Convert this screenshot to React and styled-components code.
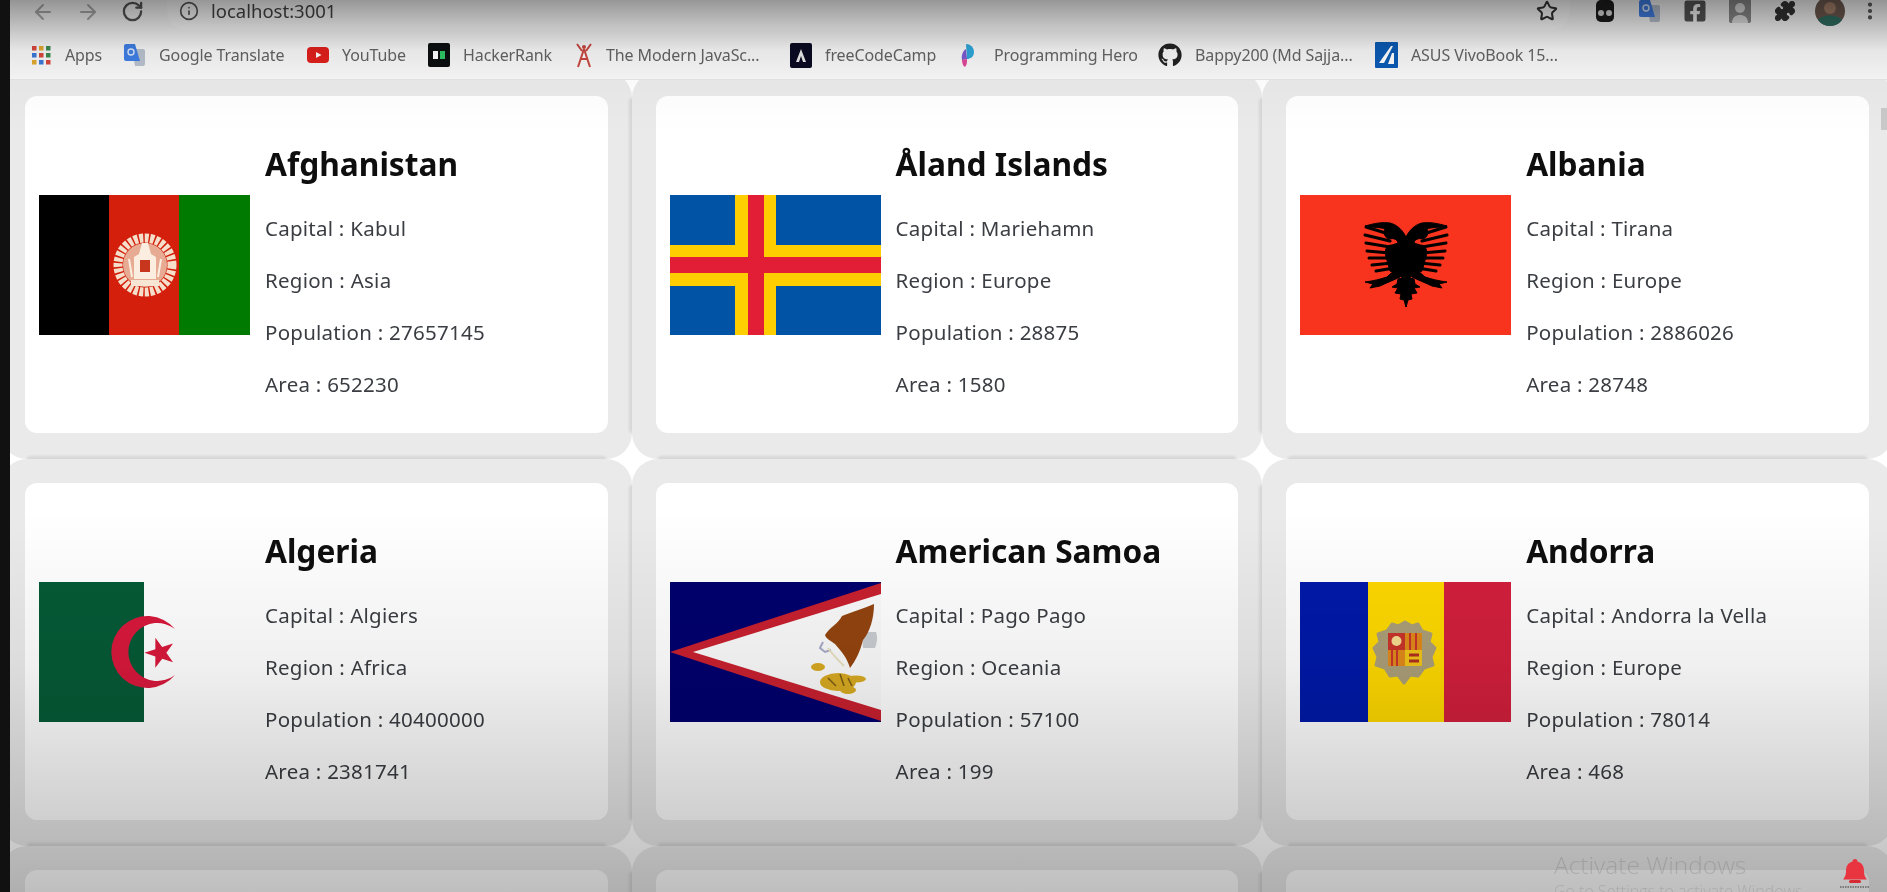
import styled, { createGlobalStyle } from "styled-components";
import { ArrowLeft, ArrowRight, RotateCw, Info, Star, Puzzle, MoreVertical } from "lucide-react";
import { FaGithub, FaFacebookSquare } from "react-icons/fa";

const GlobalStyle = createGlobalStyle`
  html, body { margin: 0; padding: 0; background: #fff; }
  body { font-family: "Noto Sans", "Open Sans", sans-serif; overflow: hidden; }
  #root { filter: blur(0.55px); }
`;

const Page = styled.div`
  position: relative;
  height: 100vh;
  overflow: hidden;
  background: #fff;
`;

const Chrome = styled.header`
  position: relative;
  z-index: 2;
  height: 80px;
  background: #f7f7f7;
  border-bottom: 1px solid #e4e4e4;
  box-sizing: border-box;
`;

const AddressRow = styled.div`
  display: flex;
  align-items: flex-start;
  height: 30px;
  padding-left: 20px;
  color: #666;
`;

const NavButton = styled.span`
  width: 45px;
  flex: none;
  display: flex;
  justify-content: center;
  color: ${(p) => (p.$active ? "#555" : "#aaa")};
`;

const Pill = styled.div`
  display: flex;
  flex: none;
  align-items: center;
  gap: 12px;
  width: 1403px;
  height: 30px;
  margin-left: 12px;
  padding: 0 12px 8px 12px;
  box-sizing: border-box;
  background: #fbfbfb;
  border-radius: 0 0 20px 20px;
  color: #555;
  font-size: 18.5px;
  line-height: 20px;
  font-family: "Noto Sans", sans-serif;
`;

const Host = styled.span`
  flex: 1;
  color: #444;
`;

const Extensions = styled.div`
  display: flex;
  flex: none;
  margin-left: 12px;
`;

const Extension = styled.span`
  width: ${(p) => p.$w || 45}px;
  height: 22px;
  display: flex;
  align-items: center;
  justify-content: center;
  color: ${(p) => p.$color || "#444"};
`;

const Bookmarks = styled.nav`
  display: flex;
  align-items: center;
  height: 50px;
  padding-left: 30px;
`;

const Bookmark = styled.a`
  display: flex;
  align-items: center;
  gap: 13px;
  width: ${(p) => p.$w}px;
  flex: none;
  font-size: 16px;
  font-family: "Noto Sans", sans-serif;
  letter-spacing: -0.1px;
  color: #636363;
  white-space: nowrap;
`;

const Grid = styled.main`
  display: grid;
  grid-template-columns: repeat(3, 630.6px);
  grid-auto-rows: 387px;
  margin-top: -8px;
  padding-left: 1px;
`;

const Tile = styled.section`
  position: relative;
  padding: 24px;
  background: #eaeaea;
  border-radius: 26px;

  &::before,
  &::after {
    content: "";
    position: absolute;
    background: rgba(0, 0, 0, 0.08);
    border-radius: 3px;
    filter: blur(1px);
  }
  &::before {
    left: 26px;
    right: 26px;
    bottom: -3px;
    height: 6px;
  }
  &::after {
    top: 26px;
    bottom: 26px;
    right: -3px;
    width: 6px;
  }
`;

const Card = styled.article`
  display: flex;
  align-items: center;
  gap: 15px;
  height: 337px;
  padding-left: 14px;
  background: #fff;
  border-radius: 12px;
`;

const FlagBox = styled.svg`
  width: 211px;
  height: 140px;
  flex: none;
  display: block;
`;

const Details = styled.div`
  display: flex;
  flex-direction: column;
  height: 100%;
  padding-top: 48px;
  box-sizing: border-box;
`;

const Name = styled.h2`
  margin: 0 0 28px;
  font-size: 31.7px;
  line-height: 40px;
  font-weight: 700;
  color: #0e0e0e;
`;

const Fact = styled.p`
  margin: 0 0 20px;
  font-size: 20.5px;
  letter-spacing: 0.25px;
  line-height: 32px;
  color: #3a3d42;
`;

const Shade = styled.div`
  position: absolute;
  left: 0;
  right: 0;
  z-index: 3;
  pointer-events: none;
  ${(p) =>
    p.$top
      ? `top: 0; height: 135px; background: linear-gradient(to bottom, rgba(0,0,0,.4), rgba(0,0,0,.2) 30px, rgba(0,0,0,.07) 50px, rgba(0,0,0,.02) 80px, transparent);`
      : `bottom: 0; height: 380px; background: linear-gradient(to bottom, transparent, rgba(0,0,0,.06) 40%, rgba(0,0,0,.2) 85%, rgba(0,0,0,.25));`}
`;

const BlackEdge = styled.div`
  position: absolute;
  top: 0;
  bottom: 0;
  left: 0;
  width: 10px;
  z-index: 4;
  background: #111;
`;

const ScrollThumb = styled.div`
  position: absolute;
  top: 108px;
  right: 0;
  width: 6px;
  height: 22px;
  z-index: 2;
  background: #c9c9c9;
`;

const Watermark = styled.div`
  position: absolute;
  left: 1554px;
  top: 850px;
  z-index: 4;
  color: rgba(0, 0, 0, 0.12);
  font-family: "Open Sans", sans-serif;
  font-size: 24.5px;
  line-height: 30px;
  font-weight: 300;
  white-space: nowrap;
  small {
    display: block;
    font-size: 16px;
    line-height: 22px;
  }
`;

const Bell = styled.svg`
  position: absolute;
  left: 1838px;
  top: 856px;
  width: 34px;
  height: 34px;
  z-index: 4;
`;

/* favicons */
const AppsIcon = () => (
  <svg width="22" height="22" viewBox="0 0 22 22">
    {[0, 1, 2].flatMap((r) =>
      [0, 1, 2].map((c) => (
        <rect
          key={`${r}${c}`}
          x={2 + c * 7}
          y={2 + r * 7}
          width="4.5"
          height="4.5"
          fill={[["#d9473c", "#e0a82e", "#3d8b4f"], ["#3b78d8", "#d9473c", "#3d8b4f"], ["#e0a82e", "#3b78d8", "#d9473c"]][r][c]}
        />
      ))
    )}
  </svg>
);

const TranslateIcon = ({ size = 22 }) => (
  <svg width={size} height={size} viewBox="0 0 22 22">
    <path d="M8 5h11a2 2 0 0 1 2 2v13a2 2 0 0 1-2 2h-8z" fill="#b9c2cf" />
    <path d="M2 0h9l5 17H2a2 2 0 0 1-2-2V2a2 2 0 0 1 2-2z" fill="#3f7fe6" />
    <circle cx="7" cy="8" r="3" fill="none" stroke="#dce8fb" strokeWidth="1.4" />
  </svg>
);

const YoutubeIcon = () => (
  <svg width="22" height="22" viewBox="0 0 22 22">
    <rect x="0" y="3" width="22" height="16" rx="4" fill="#e0201c" />
    <path d="M9 8l5.5 3L9 14z" fill="#fff" />
  </svg>
);

const HackerRankIcon = () => (
  <svg width="22" height="24" viewBox="0 0 22 24">
    <rect width="22" height="24" rx="2" fill="#0c0f0f" />
    <rect x="5" y="8" width="5" height="8" fill="#fff" />
    <rect x="12" y="8" width="5" height="8" fill="#2ec866" />
  </svg>
);

const JsIcon = () => (
  <svg width="18" height="26" viewBox="0 0 18 26">
    <circle cx="9" cy="5" r="2" fill="#c9473f" />
    <path d="M9 7L3 25M9 7l6 18M2 2l5 7M16 2l-5 7M5 17h8" stroke="#c9473f" strokeWidth="2" fill="none" />
  </svg>
);

const FccIcon = () => (
  <svg width="22" height="25" viewBox="0 0 22 25">
    <rect width="22" height="25" rx="2" fill="#0a0a23" />
    <path d="M11 6l-5 13h3l2-6 2 6h3z" fill="#e8e8e8" />
  </svg>
);

const HeroIcon = () => (
  <svg width="22" height="27" viewBox="0 0 22 27">
    <path d="M7 2a8 8 0 0 1 8 8c0 5-4 7-7 7z" fill="#2fa6d9" />
    <path d="M7 7c-3 2-5 6-4 11l5-1z" fill="#7a5bd0" />
    <path d="M3 18c0 3 1 6 3 7 2-2 2-5 2-8z" fill="#e0469a" />
  </svg>
);

const AsusIcon = () => (
  <svg width="23" height="26" viewBox="0 0 23 26">
    <rect width="23" height="26" rx="1" fill="#0b5bb5" />
    <path d="M4 21L16 4h2L9 21zM13 22l4-11h2v11z" fill="#fff" />
  </svg>
);

/* flags, all in the same 211 x 140 box */
const Afghanistan = () => (
  <FlagBox viewBox="0 0 211 140">
    <rect width="70" height="140" fill="#000" />
    <rect x="70" width="70" height="140" fill="#d31f0c" />
    <rect x="140" width="71" height="140" fill="#007a00" />
    <circle cx="106" cy="70" r="27" fill="none" stroke="#f6dfca" strokeWidth="9" strokeDasharray="4 1.500" />
    <circle cx="106" cy="70" r="22" fill="#e7ab94" />
    <path d="M95 84V62l5-3 3-11h6l3 11 5 3v22z" fill="#fbeee0" />
    <path d="M90 64l3 18M122 64l-3 18" stroke="#fbeee0" strokeWidth="2" />
    <rect x="101" y="65" width="10" height="12" fill="#c8361e" />
    <rect x="92" y="85" width="28" height="6" fill="#f8e6d4" />
  </FlagBox>
);

const Aland = () => (
  <FlagBox viewBox="0 0 211 140">
    <rect width="211" height="140" fill="#0053a5" />
    <rect x="65" width="41" height="140" fill="#ffce00" />
    <rect y="50" width="211" height="41" fill="#ffce00" />
    <rect x="78" width="16" height="140" fill="#e21e37" />
    <rect y="62" width="211" height="16" fill="#e21e37" />
  </FlagBox>
);

const feathers = [
  [120, 40, 146, 32], [122, 46, 147, 40], [122, 52, 146, 48], [122, 58, 145, 56],
  [122, 63, 143, 63], [120, 68, 140, 70], [118, 73, 136, 76],
];

const EagleHalf = () => (
  <g fill="#000" stroke="#000">
    <path d="M106 42c3-6 8-12 16-14 8-1 14 0 25 3-8 2-16 1-20 3 2 4 0 9-4 10-5-1-8 0-9 4l6 2c4 0 8 2 6 12l-4 14-9 4-7 6z" strokeWidth="1" />
    {feathers.map(([x1, y1, x2, y2]) => (
      <line key={y1} x1={x1} y1={y1} x2={x2} y2={y2} strokeWidth="3" strokeLinecap="round" />
    ))}
    <path d="M112 76c6-1 10 3 13 6 6 2 14 4 22 5l-8 2 3 4-10-2c-6-3-14-6-20-9z" strokeWidth="1" />
    <path d="M106 82l8 2 1 5 5 3-6 1 3 5-6 1 1 5-4 1-2 7z" strokeWidth="1" />
  </g>
);

const Albania = () => (
  <FlagBox viewBox="0 0 211 140">
    <rect width="211" height="140" fill="#f8341f" />
    <EagleHalf />
    <g transform="matrix(-1 0 0 1 212 0)">
      <EagleHalf />
    </g>
  </FlagBox>
);

const Algeria = () => (
  <FlagBox viewBox="0 0 211 140">
    <rect width="105" height="140" fill="#055a36" />
    <path d="M136 47A36 36 0 1 0 136 93A29 29 0 1 1 136 47z" fill="#d8183c" />
    <path d="M121 55l3.600 10.800 11.400 .2-9.200 6.800 3.400 11-9.200-6.600-9.400 6.400 3.600-10.800-9.200-7 11.400 .2z" fill="#d8183c" transform="rotate(-18 121 70)" />
  </FlagBox>
);

const Samoa = () => (
  <FlagBox viewBox="0 0 211 140">
    <rect width="211" height="140" fill="#00006d" />
    <path d="M0 70L211 1v138z" fill="#c8202f" />
    <path d="M23 70L211 12v116z" fill="#fafafa" />
    <path d="M192 50h14c2 5 1 11-1 16h-12z" fill="#c9ccd0" />
    <path d="M155 53C160 45 168 42 172 34C182 30 195 26 204 22C204 36 200 50 193 58C190 70 186 78 180 86C177 76 172 70 165 62C160 58 156 57 155 53z" fill="#93440f" />
    <path d="M153 60l-3 6 5 4 6-2" fill="none" stroke="#a6aac8" strokeWidth="2" />
    <path d="M158 66c4 6 8 10 16 18" stroke="#e8e0c0" strokeWidth="2" fill="none" />
    <g fill="#d8aa22">
      <ellipse cx="148" cy="85" rx="7" ry="4" />
      <ellipse cx="168" cy="100" rx="18" ry="9" />
      <ellipse cx="186" cy="97" rx="10" ry="3.500" />
      <ellipse cx="178" cy="108" rx="8" ry="4" />
    </g>
    <path d="M158 96l8 8M170 92l4 12M178 96l4 8" stroke="#7a5c14" strokeWidth="1.500" />
  </FlagBox>
);

const Andorra = () => (
  <FlagBox viewBox="0 0 211 140">
    <rect width="68" height="140" fill="#0019a8" />
    <rect x="68" width="76" height="140" fill="#fed800" />
    <rect x="144" width="67" height="140" fill="#d21f3c" />
    <path
      d="M92 42l6 2 7-4 7 4 6-2 4 7 9 3-2 8 6 6-4 9 2 8-9 3-6 8-8-1-6 8-6-8-8 1-5-8-9-3 2-8-4-9 6-6-2-8 9-3z"
      fill="#ab9f78"
      stroke="#ab9f78"
      strokeWidth="3"
      strokeLinejoin="round"
    />
    <rect x="88" y="51" width="17" height="17" fill="#c8342a" />
    <circle cx="96.500" cy="59" r="5" fill="#f6dc90" />
    <rect x="105" y="51" width="17" height="17" fill="#e08a1a" />
    <rect x="88" y="68" width="17" height="16" fill="#e08a1a" />
    <rect x="105" y="68" width="17" height="16" fill="#f0c419" />
    <path d="M109 73h10M109 79h10" stroke="#b03020" strokeWidth="3" />
    <path d="M92 68v16M97 68v16M110 51v17M116 51v17" stroke="#c8342a" strokeWidth="2" />
  </FlagBox>
);

const countries = [
  { name: "Afghanistan", capital: "Kabul", region: "Asia", population: 27657145, area: 652230, Flag: Afghanistan },
  { name: "Åland Islands", capital: "Mariehamn", region: "Europe", population: 28875, area: 1580, Flag: Aland },
  { name: "Albania", capital: "Tirana", region: "Europe", population: 2886026, area: 28748, Flag: Albania },
  { name: "Algeria", capital: "Algiers", region: "Africa", population: 40400000, area: 2381741, Flag: Algeria },
  { name: "American Samoa", capital: "Pago Pago", region: "Oceania", population: 57100, area: 199, Flag: Samoa },
  { name: "Andorra", capital: "Andorra la Vella", region: "Europe", population: 78014, area: 468, Flag: Andorra },
];

const bookmarks = [
  { label: "Apps", w: 94, Icon: AppsIcon },
  { label: "Google Translate", w: 183, Icon: TranslateIcon },
  { label: "YouTube", w: 121, Icon: YoutubeIcon },
  { label: "HackerRank", w: 147, Icon: HackerRankIcon },
  { label: "The Modern JavaSc...", w: 215, Icon: JsIcon },
  { label: "freeCodeCamp", w: 169, Icon: FccIcon },
  { label: "Programming Hero", w: 199, Icon: HeroIcon },
  { label: "Bappy200 (Md Sajja...", w: 217, Icon: () => <FaGithub size={24} color="#222" /> },
  { label: "ASUS VivoBook 15...", w: 220, Icon: AsusIcon },
];

const Country = ({ country }) => {
  const { Flag } = country;
  return (
    <Tile>
      <Card>
        <Flag />
        <Details>
          <Name>{country.name}</Name>
          <Fact>Capital : {country.capital}</Fact>
          <Fact>Region : {country.region}</Fact>
          <Fact>Population : {country.population}</Fact>
          <Fact>Area : {country.area}</Fact>
        </Details>
      </Card>
    </Tile>
  );
};

const App = () => {
  return (
    <Page>
      <GlobalStyle />
      <Chrome>
        <AddressRow>
          <NavButton><ArrowLeft size={24} /></NavButton>
          <NavButton><ArrowRight size={24} /></NavButton>
          <NavButton $active><RotateCw size={23} strokeWidth={2.4} /></NavButton>
          <Pill>
            <Info size={20} />
            <Host>localhost:3001</Host>
            <Star size={22} strokeWidth={2.2} color="#333" />
          </Pill>
          <Extensions>
            <Extension>
              <svg width="22" height="22" viewBox="0 0 22 22">
                <path d="M2 5a5 5 0 0 1 5-5h8a5 5 0 0 1 5 5v12a5 5 0 0 1-5 5H7a5 5 0 0 1-5-5z" fill="#1c1c1c" />
                <circle cx="7" cy="13" r="3" fill="#ddd" />
                <circle cx="15" cy="13" r="3" fill="#ddd" />
              </svg>
            </Extension>
            <Extension><TranslateIcon /></Extension>
            <Extension $color="#555"><FaFacebookSquare size={24} /></Extension>
            <Extension>
              <svg width="22" height="24" viewBox="0 0 22 24">
                <rect width="22" height="24" rx="2" fill="#8a8a8a" />
                <circle cx="11" cy="9" r="5" fill="#ddd" />
                <path d="M3 24c0-6 4-8 8-8s8 2 8 8z" fill="#ddd" />
              </svg>
            </Extension>
            <Extension $color="#333"><Puzzle size={22} fill="#333" /></Extension>
            <Extension>
              <svg width="30" height="30" viewBox="0 0 30 30">
                <circle cx="15" cy="15" r="15" fill="#6e5a50" />
                <circle cx="15" cy="12" r="6" fill="#a5806a" />
                <path d="M3 24c4-6 20-6 24 0a15 15 0 0 1-24 0z" fill="#2f6e62" />
              </svg>
            </Extension>
            <Extension $w={35} $color="#555"><MoreVertical size={22} strokeWidth={2.6} /></Extension>
          </Extensions>
        </AddressRow>
        <Bookmarks>
          {bookmarks.map(({ label, w, Icon }) => (
            <Bookmark key={label} $w={w}>
              <Icon />
              {label}
            </Bookmark>
          ))}
        </Bookmarks>
      </Chrome>

      <Grid>
        {countries.map((c) => (
          <Country key={c.name} country={c} />
        ))}
        <Tile><Card /></Tile>
        <Tile><Card /></Tile>
        <Tile><Card /></Tile>
      </Grid>

      <ScrollThumb />
      <BlackEdge />
      <Shade $top />
      <Shade />
      <Watermark>
        Activate Windows
        <small>Go to Settings to activate Windows.</small>
      </Watermark>
      <Bell viewBox="0 0 34 34">
        <path d="M17 3a2.500 2.500 0 0 1 2.500 2.500c5 1.500 6.500 5 6.500 10 0 4 1.500 6 3 8H5c1.500-2 3-4 3-8 0-5 1.500-8.500 6.500-10A2.500 2.500 0 0 1 17 3z" fill="#e8353f" />
        <rect x="11" y="24" width="12" height="3" rx="1.500" fill="#d62b35" />
        <path d="M2 31h30" stroke="#333" strokeWidth="1.200" strokeDasharray="1.500 1" />
      </Bell>
    </Page>
  );
};

export default App;
